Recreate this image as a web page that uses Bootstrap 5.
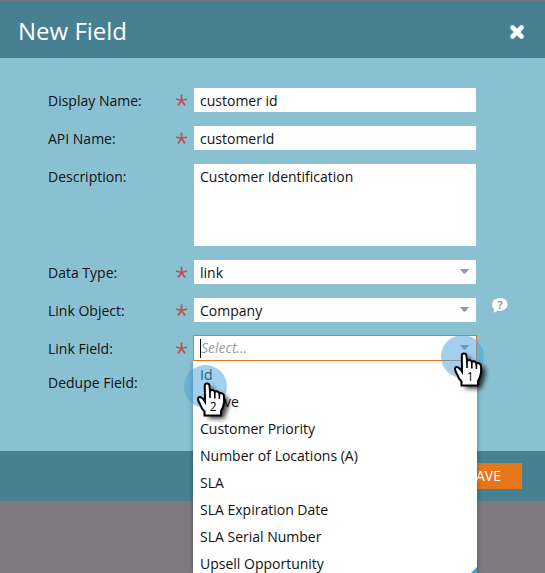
<!DOCTYPE html>
<html lang="en">
<head>
<meta charset="utf-8">
<meta name="viewport" content="width=device-width, initial-scale=1">
<title>New Field</title>
<link href="https://cdn.jsdelivr.net/npm/bootstrap@5.3.0/dist/css/bootstrap.min.css" rel="stylesheet">
<style>
body{background:#7e7a7d;font-family:"Open Sans",sans-serif;font-size:14px;line-height:20px;color:#111;height:573px;overflow:hidden}
.dialog{height:501px;border-top:1px solid #74777c;background:#89c1d2}
.dialog-head{height:57px;background:#468091;padding:0 19px 0 18px}
.dialog-title{font-size:24px;line-height:30px;font-weight:400;margin:2px 0 0}
.dialog-body{height:393px;padding:30px 0 0 48px}
.dialog-foot{height:50px;background:#468091;padding-right:23px}
.field-row{height:24px;margin-bottom:14px}
.field-row.tall{height:82px}
.field-label{width:127px;padding-top:3px}
.field-label.flush{padding-top:0;margin-top:-1px}
.req{width:19px;padding-top:6px}
.field-row svg{display:block}
.field-box,.field-box:focus{width:282px;height:24px;padding:2px 6px 0;border:0;border-radius:0;background:#fff;color:#111;font-size:14px;line-height:22px;box-shadow:none}
input.field-box,input.field-box:focus{padding:1px 6px}
textarea.field-box,textarea.field-box:focus{height:82px;min-height:0;padding:3px 6px;line-height:20px;resize:none}
.pick{position:relative}
.arrow{position:absolute;right:7px;top:9px}
.focused{margin:-1px 0 0 -1px}
.focused .field-box{width:284px;height:26px;border:1px solid #e8761a;line-height:22px;padding-top:1px}
.focused .arrow{right:8px;top:10px}
.hint{color:#999;font-style:italic}
.caret{width:1px;height:19px;background:#000;margin-top:2px}
.options{position:absolute;left:0;top:26px;width:284px;height:212px;background:#fff;padding:0;margin:0;box-shadow:0 0 5px rgba(0,0,0,.35);clip-path:inset(0 -8px -8px -8px);z-index:5}
.options li{height:27px;padding:4px 7px 0;list-style:none}
.save,.save:hover{width:84px;height:26px;background:#e8761a;color:#fff;border:0;border-radius:0;padding:0 21px 0 0;font-size:14px;line-height:26px;text-align:right}
.pointer{position:absolute;z-index:10;pointer-events:none}
.p1{left:438px;top:332px}.p2{left:181px;top:362px}
.corner{left:471px;top:567px}
</style>
</head>
<body>
<svg width="0" height="0" class="position-absolute">
<defs>
<filter id="soft" x="-50%" y="-50%" width="200%" height="200%"><feGaussianBlur stdDeviation="2.4"/></filter>
<path id="hand" d="M23.800 23.500C23.800 20.800 28.200 20.800 28.400 23.500L29 28.800C30 27.400 33.400 27.800 33.800 30C35 28.800 38 29.400 38.400 31.400C40 30.500 42.600 31.600 43 34C43.600 38 43 42 41.800 45.500L40 49V53.500H23.500V49.500C21.500 47.500 20 45 19 42C17.500 39.500 16.500 37.500 17.200 35.800C18.500 34 21.500 35.200 24 39.500Z"/>
<g id="star"><path d="M6.500 .5V6.500M6.500 6.500L1 5M6.500 6.500L12 5M6.500 6.500L3 11.500M6.500 6.500L10 11.500" fill="none" stroke="#bb5152" stroke-width="1.800"/></g>
<g id="grab">
<circle cx="24.500" cy="24.500" r="21.500" fill="#45a0dc" fill-opacity=".5"/>
<use href="#hand" x="4" y="3" fill="#000" opacity=".8" filter="url(#soft)"/>
<use href="#hand" fill="#fff" stroke="#000" stroke-width="2"/>
<path d="M29 28V36M33.800 30V36.500M38.400 31.500V37" stroke="#000" stroke-width="1.600"/>
</g>
</defs>
</svg>
<main class="dialog">
<header class="dialog-head d-flex align-items-center justify-content-between text-white">
<h1 class="dialog-title">New Field</h1>
<svg width="18" height="18" viewBox="0 0 18 18" class="mt-1"><path d="M4.500 4.500L13.500 13.500M13.500 4.500L4.500 13.500" stroke="#fff" stroke-width="4.600" stroke-linecap="round"/></svg>
</header>
<form class="dialog-body">
<div class="field-row d-flex"><label class="field-label">Display Name:</label><span class="req"><svg width="13" height="13"><use href="#star"/></svg></span><input class="form-control field-box" value="customer id"></div>
<div class="field-row d-flex"><label class="field-label">API Name:</label><span class="req"><svg width="13" height="13"><use href="#star"/></svg></span><input class="form-control field-box" value="customerId"></div>
<div class="field-row tall d-flex"><label class="field-label">Description:</label><span class="req"></span><textarea class="form-control field-box">Customer Identification</textarea></div>
<div class="field-row d-flex"><label class="field-label">Data Type:</label><span class="req"><svg width="13" height="13"><use href="#star"/></svg></span><div class="pick"><div class="field-box">link</div><svg class="arrow" width="9" height="5"><path d="M0 0H9L5.500 4.500H3.500Z" fill="#999"/></svg></div></div>
<div class="field-row d-flex"><label class="field-label">Link Object:</label><span class="req"><svg width="13" height="13"><use href="#star"/></svg></span><div class="pick"><div class="field-box">Company</div><svg class="arrow" width="9" height="5"><path d="M0 0H9L5.500 4.500H3.500Z" fill="#999"/></svg></div>
<svg class="ms-3" width="16" height="16" viewBox="0 0 16 16"><path d="M8 0C3.500 0 0 2.800 0 6.500C0 8.700 .9 10.300 2.200 11.500L1.300 14.700L5.500 12.700C11.500 13.500 15.500 10.500 15.500 6.500C15.500 2.800 12.500 0 8 0Z" fill="#fff"/><text x="8" y="10.500" text-anchor="middle" font-family="Open Sans" font-size="11" font-weight="700" fill="#999">?</text></svg></div>
<div class="field-row d-flex"><label class="field-label">Link Field:</label><span class="req"><svg width="13" height="13"><use href="#star"/></svg></span><div class="pick focused"><div class="field-box d-flex"><span class="caret"></span><span class="hint">Select...</span></div><svg class="arrow" width="9" height="5"><path d="M0 0H9L5.500 4.500H3.500Z" fill="#999"/></svg>
<ul class="options"><li>Id</li><li>Active</li><li>Customer Priority</li><li>Number of Locations (A)</li><li>SLA</li><li>SLA Expiration Date</li><li>SLA Serial Number</li><li>Upsell Opportunity</li></ul></div></div>
<div class="field-row d-flex"><label class="field-label flush">Dedupe Field:</label></div>
</form>
<footer class="dialog-foot d-flex align-items-center justify-content-end"><button type="button" class="btn save">SAVE</button></footer>
</main>
<svg class="pointer corner" width="6" height="6"><path d="M6 0V6H0Z" fill="#469dc6"/></svg>
<svg class="pointer p1" width="60" height="70" viewBox="0 0 60 70"><use href="#grab"/><text x="32.300" y="49" text-anchor="middle" font-family="Open Sans" font-size="12" fill="#000">1</text></svg>
<svg class="pointer p2" width="60" height="70" viewBox="0 0 60 70"><use href="#grab"/><text x="32.300" y="49" text-anchor="middle" font-family="Open Sans" font-size="12" fill="#000">2</text></svg>
<script src="https://cdn.jsdelivr.net/npm/bootstrap@5.3.0/dist/js/bootstrap.bundle.min.js"></script>
</body>
</html>
